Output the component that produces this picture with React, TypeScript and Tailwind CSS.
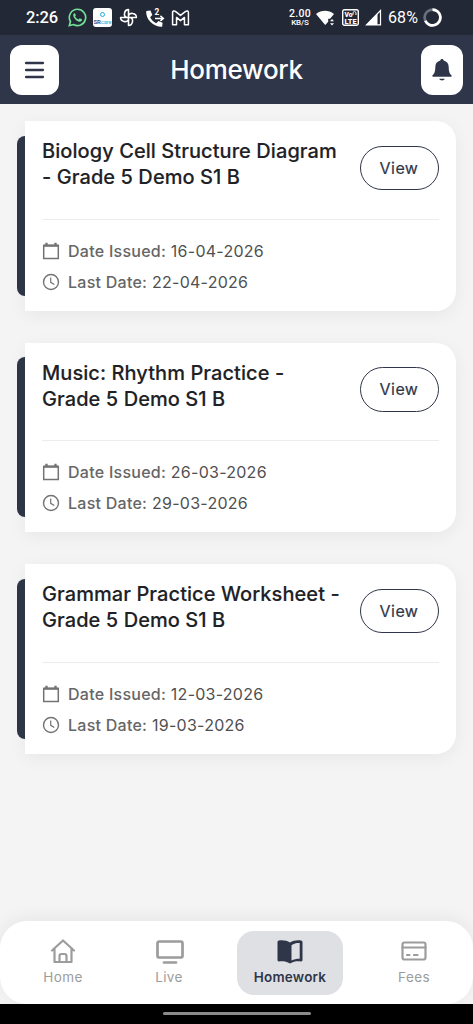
import type { ReactNode } from 'react';

type Homework = { title: string[]; issued: string; last: string };

const items: Homework[] = [
  { title: ['Biology Cell Structure Diagram', '- Grade 5 Demo S1 B'], issued: '16-04-2026', last: '22-04-2026' },
  { title: ['Music: Rhythm Practice -', 'Grade 5 Demo S1 B'], issued: '26-03-2026', last: '29-03-2026' },
  { title: ['Grammar Practice Worksheet -', 'Grade 5 Demo S1 B'], issued: '12-03-2026', last: '19-03-2026' },
];

function StatusBar() {
  return (
    <div className="flex h-[35px] shrink-0 items-center bg-[#222835] pl-[26px] pr-[31px] font-['Roboto',sans-serif] text-white">
      <span className="mt-[2px] w-[42px] text-[16.5px] leading-none font-medium tracking-[-0.1px]">2:26</span>
      <svg className="h-[19px] w-[19px]" viewBox="0 0 24 24">
        <path d="M12 1.6A10.3 10.3 0 0 0 3.1 17.1L1.7 22.3l5.3-1.4A10.3 10.3 0 1 0 12 1.6z" fill="none" stroke="#72df97" strokeWidth="2.1" />
        <path d="M8.2 6.5c-.6 0-1.6.9-1.6 2.5 0 3.2 4.3 7.9 7.9 8.3 1.8.2 3.2-.9 3.2-2.4l-.1-.6-2.8-1.3-1.3 1.5c-2.1-.8-3.7-2.3-4.6-4.1l1.1-1.3-1.1-2.6z" fill="#72df97" />
      </svg>
      <div className="ml-[6px] flex h-[19px] w-[19px] flex-col items-center rounded-[3px] bg-white pt-[4px]">
        <span className="h-[5px] w-[5px] rounded-full border-[1.5px] border-[#20aee6]" />
        <span className="mt-[1.5px] text-[6px] leading-[6px] font-bold tracking-[-0.2px] text-[#4e5985]">SR<span className="font-normal text-[#42b5d9]">care</span></span>
      </div>
      <svg className="ml-[7px] h-[19px] w-[19px]" viewBox="0 0 24 24" fill="none" stroke="white" strokeWidth="2" strokeLinejoin="round">
        <path d="M12 12H10.5C7 12 6.500 8.500 7 6.500 7.500 4 9.500 2 12 2v10zM12 12v-1.500c0-3.500 3.500-4 5.500-3.500 2.500.5 4.500 2.500 4.500 5H12zM12 12h1.500c3.500 0 4 3.500 3.500 5.500-.5 2.500-2.500 4.500-5 4.500V12zM12 12v1.500c0 3.500-3.500 4-5.500 3.500C4 16.500 2 14.500 2 12h10z" />
      </svg>
      <svg className="ml-[7px] h-[20px] w-[20px]" viewBox="0 0 24 24">
        <path d="M1.500 3.500 6.500 3l2.300 5.500-2.700 2.700c1.600 3.200 4 5.500 7.300 7.200l2.700-2.700 5 2-.5 4.900C10.500 23 .500 13.500 1.500 3.500z" fill="white" />
        <path d="M12 12.500h9.500m-3-3 3.500 3-3.500 3" fill="none" stroke="white" strokeWidth="1.800" />
        <text x="11.500" y="8.500" fontSize="10" fontWeight="700" fill="white" fontFamily="Roboto, sans-serif">2</text>
      </svg>
      <svg className="ml-[6px] h-[16px] w-[19px]" viewBox="0 0 24 20" fill="none" stroke="white" strokeWidth="1.900" strokeLinejoin="round">
        <path d="M2 18.500V3c0-2 2-2.500 3.500-1.300L12 6.800l6.500-5.100C20 .5 22 1 22 3v15.500h-5V9.300l-5 4-5-4v9.200z" />
      </svg>
      <div className="ml-auto flex w-[22px] flex-col items-center font-medium">
        <span className="text-[10.500px] leading-[10px] tracking-[0.3px]">2.00</span>
        <span className="text-[8px] leading-[8px] tracking-[-0.1px]">KB/S</span>
      </div>
      <svg className="ml-[5px] h-[18px] w-[19px]" viewBox="0 0 19 18" fill="white">
        <path d="M0 5C5.500.8 12.500.8 18 5l-4 4.800h-1.800v3L9.200 16z" />
        <path d="m16 10 2 2.300h-4zM16 16.500l-2-2.300h4z" />
      </svg>
      <svg className="ml-[7px] h-[17px] w-[17px]" viewBox="0 0 17 17">
        <rect x=".7" y=".7" width="15.600" height="15.600" rx="1.800" fill="none" stroke="white" strokeWidth="1.400" />
        <text x="2.400" y="7.600" fontSize="7" fontWeight="900" fill="white" textLength="8" lengthAdjust="spacingAndGlyphs" fontFamily="Roboto, sans-serif">Vo</text>
        <path d="M11 6V3.500l1.400-1.200L14 3.500V6" stroke="white" fill="none" />
        <text x="2.500" y="15" fontSize="8" fontWeight="900" fill="white" textLength="12" lengthAdjust="spacingAndGlyphs" fontFamily="Roboto, sans-serif">LTE</text>
      </svg>
      <svg className="ml-[6px] h-[17px] w-[17px]" viewBox="0 0 17 17">
        <path d="M1.500 15.800 15.500 1.500v14.300z" fill="none" stroke="white" strokeWidth="1.200" />
        <path d="M1 16 12.500 4.300V16z" fill="white" />
      </svg>
      <span className="mt-px ml-[6px] w-[31px] text-[16px] leading-none tracking-[0.1px] whitespace-nowrap">68%</span>
      <svg className="ml-[4px] h-[19px] w-[19px]" viewBox="0 0 19 19" fill="none" strokeWidth="2.700">
        <circle cx="9.500" cy="9.500" r="7.900" stroke="#697080" />
        <path d="M9.500 1.600A7.900 7.900 0 1 1 2.300 12.800" stroke="white" />
      </svg>
    </div>
  );
}

function Header() {
  return (
    <header className="flex h-[69px] shrink-0 items-center justify-between bg-[#303649] pr-[10px] pl-[10px]">
      <button className="flex h-[50px] w-[49px] items-center justify-center rounded-[12px] bg-white">
        <svg className="h-[18px] w-[20px]" viewBox="0 0 20 18" stroke="#303649" strokeWidth="2.300" strokeLinecap="round">
          <path d="M1 2h17M1 9h17M1 16h17" />
        </svg>
      </button>
      <h1 className="pr-[7px] text-[26px] leading-none font-medium tracking-[-0.3px] text-white">Homework</h1>
      <button className="flex h-[50px] w-[42px] items-center justify-center rounded-[12px] bg-white">
        <svg className="h-[22px] w-[20px]" viewBox="0 0 20 22" fill="#303649">
          <path d="M10 0c1 0 1.600.6 1.700 1.500 3.200.8 5 3.300 5 6.500 0 5.200 1.300 7 2.500 8 .9.800.5 1.800-.6 1.800H1.400c-1.100 0-1.500-1-.6-1.800 1.200-1 2.500-2.800 2.500-8 0-3.200 1.800-5.700 5-6.500C8.400.6 9 0 10 0zM7.200 19.800h5.600c-.5 1-1.500 1.700-2.800 1.700s-2.300-.7-2.800-1.700z" />
        </svg>
      </button>
    </header>
  );
}

function DateRow({ icon, label, value }: { icon: ReactNode; label: string; value: string }) {
  return (
    <div className="flex h-[21px] items-center gap-[8px] text-[16px] tracking-[0.26px] whitespace-nowrap">
      <svg className="h-[18px] w-[18px] shrink-0" viewBox="0 0 18 18" fill="none" stroke="#737373" strokeWidth="1.500">
        {icon}
      </svg>
      <p className="text-[#505050]"><span className="font-medium text-[#666666]">{label}</span> {value}</p>
    </div>
  );
}

function Card({ item }: { item: Homework }) {
  return (
    <article className="flex h-[189.600px] items-center">
      <div className="h-[160px] w-[8px] shrink-0 rounded-l-[8px] bg-[#2e3648]" />
      <div className="flex h-full w-[431px] flex-col rounded-r-[20px] bg-white pr-[17.500px] pl-[17px] shadow-[0_4px_18px_rgba(0,0,0,0.055)]">
        <div className="flex h-[98.500px] justify-between border-b border-[#ececec]">
          <h2 className="pt-[17.300px] text-[20px] leading-[26px] font-medium tracking-[0.07px] whitespace-nowrap text-[#202125] [-webkit-text-stroke:0.12px_#202125]">
            {item.title.map((line) => <span key={line} className="block">{line}</span>)}
          </h2>
          <button className="mt-[24.500px] h-[44.500px] w-[79px] shrink-0 rounded-full border-[1.300px] border-[#303649] text-[16px] tracking-[0.45px] text-[#303649] [-webkit-text-stroke:0.2px_#303649]">View</button>
        </div>
        <div className="flex flex-col gap-[10px] pt-[20.700px]">
          <DateRow
            label="Date Issued:"
            value={item.issued}
            icon={<><path d="M1.700 3.500h14.600v13H1.700z" /><path d="M1.700 3.700h14.600M4.500.8v3M13.500.8v3" strokeWidth="2.300" /></>}
          />
          <DateRow label="Last Date:" value={item.last} icon={<><circle cx="9" cy="9" r="7.500" strokeWidth="1.400" /><path d="M8.700 4.500v4.800l3.600 2.200" strokeWidth="1.200" /></>} />
        </div>
      </div>
    </article>
  );
}

function NavItem({ label, active, children }: { label: string; active?: boolean; children: ReactNode }) {
  return (
    <button className={active ? 'flex h-[64px] w-[106px] flex-col items-center rounded-[17px] bg-[#dfe0e4] pt-[6px] text-[#303649]' : 'flex h-[64px] w-[106px] flex-col items-center pt-[6px] text-[#9c9c9c]'}>
      <svg className="h-[28px] w-[28px] overflow-visible" viewBox="0 0 28 28" fill="none" stroke="currentColor" strokeWidth="2.200" strokeLinecap="round" strokeLinejoin="round">{children}</svg>
      <span className={active ? 'mt-[2px] text-[13.500px] leading-[20px] font-semibold tracking-[0.2px]' : 'mt-[2px] text-[13.500px] leading-[20px] tracking-[0.4px]'}>{label}</span>
    </button>
  );
}

export default function App() {
  return (
    <div className="flex h-[1024px] w-[473px] flex-col overflow-hidden bg-[#f4f4f4] font-['Inter',sans-serif]">
      <StatusBar />
      <Header />
      <main className="flex flex-1 flex-col gap-[32px] pt-[17px] pl-[17px]">
        {items.map((item) => <Card key={item.title[0]} item={item} />)}
      </main>
      <nav className="flex h-[83px] shrink-0 rounded-[27px] bg-white pt-[9.500px] pl-[10px] shadow-[0_-3px_18px_rgba(0,0,0,0.06)]">
        <NavItem label="Home">
          <path d="m3 13.500 11-10 11 10M5.500 11.500V25h17V11.500M10.500 25v-6c0-1.200.8-2 2-2h3c1.200 0 2 .8 2 2v6" />
        </NavItem>
        <div className="mr-[15px]">
          <NavItem label="Live">
            <rect x="2.500" y="4.500" width="25" height="16" rx="1.800" strokeWidth="2.700" />
            <path d="M9 25.500h12" strokeWidth="2.700" />
          </NavItem>
        </div>
        <NavItem label="Homework" active>
          <path d="M14 5.500C11 3.500 7 3 3 3.500c-.9.100-1.500.7-1.500 1.600v18c0 .9.700 1.500 1.600 1.400 3.900-.4 7.400 0 10.900 2 3.500-2 7-2.400 10.900-2 .9.100 1.600-.5 1.600-1.400v-18c0-.9-.6-1.500-1.500-1.600-4-.5-8 0-11 2z" fill="currentColor" stroke="none" />
          <path d="M15.500 8.200c2.500-1.600 5-2.200 8.200-2.100v15.700c-3-.1-5.500.4-8.200 1.700z" fill="#dfe0e4" stroke="none" />
        </NavItem>
        <div className="ml-[18px]">
          <NavItem label="Fees">
            <rect x="2.500" y="5.500" width="23" height="17" rx="2" />
            <path d="M2.500 10.500h23M7 18h2.500M14 18h3.500" />
          </NavItem>
        </div>
      </nav>
      <footer className="flex h-[20px] shrink-0 justify-center bg-black pt-[8px]">
        <div className="h-[3px] w-[148px] rounded-full bg-[#8b8b8b]" />
      </footer>
    </div>
  );
}
